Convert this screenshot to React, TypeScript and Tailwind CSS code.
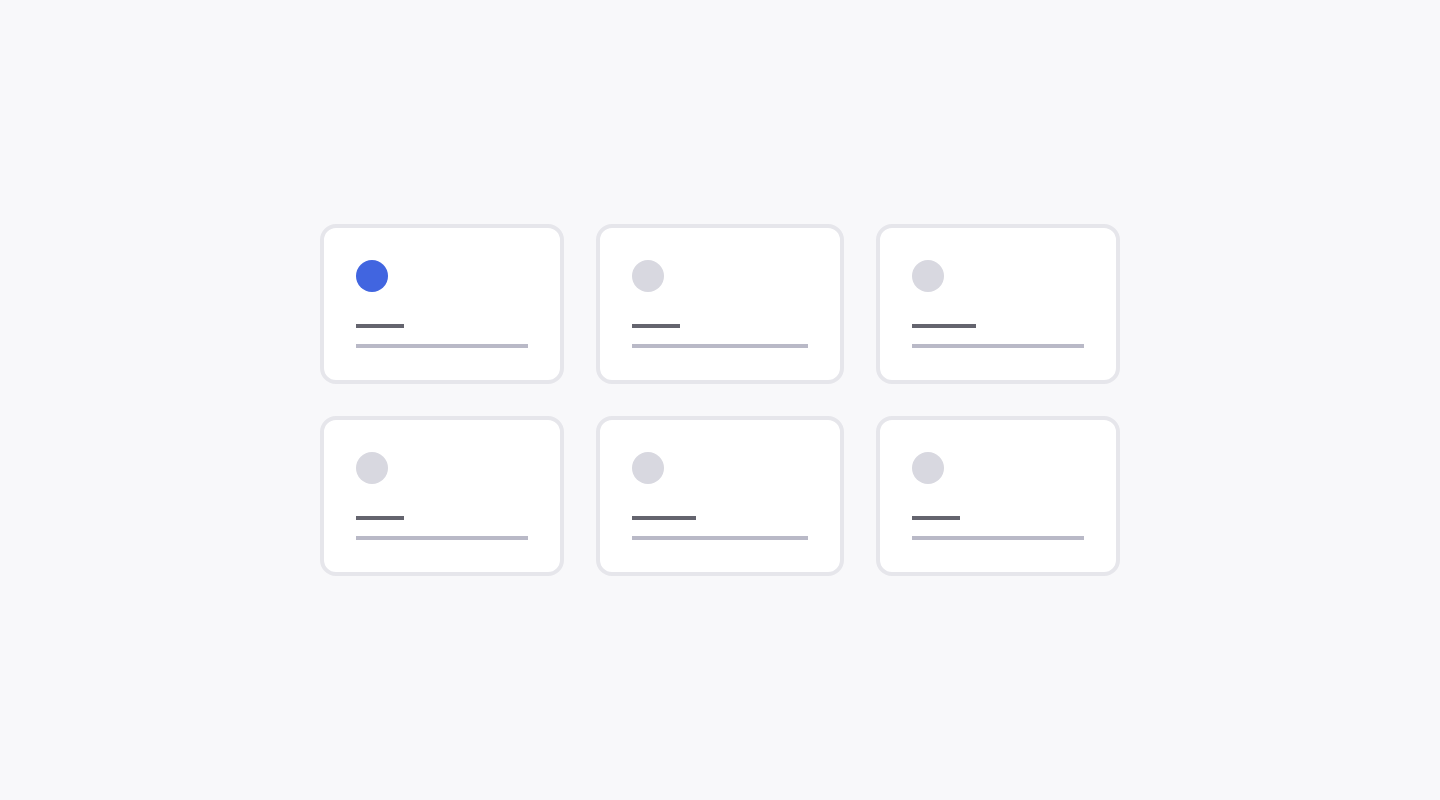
const cards = [
  { active: true, title: 48 },
  { active: false, title: 48 },
  { active: false, title: 64 },
  { active: false, title: 48 },
  { active: false, title: 64 },
  { active: false, title: 48 },
];

export default function App() {
  return (
    <div className="flex h-[800px] w-full items-center justify-center bg-[#f8f8fa]">
      <div className="grid grid-cols-[244px_248px_244px] gap-8">
        {cards.map((card, i) => (
          <div
            key={i}
            className="flex h-40 flex-col rounded-2xl border-4 border-[#e6e6eb] bg-white p-8"
          >
            <div
              className={
                card.active
                  ? "h-8 w-8 rounded-full bg-[#4165e0]"
                  : "h-8 w-8 rounded-full bg-[#d8d8e0]"
              }
            />
            <div
              className="mt-8 h-1 bg-[#64646e]"
              style={{ width: card.title }}
            />
            <div className="mt-4 h-1 w-full bg-[#b9b9c7]" />
          </div>
        ))}
      </div>
    </div>
  );
}
